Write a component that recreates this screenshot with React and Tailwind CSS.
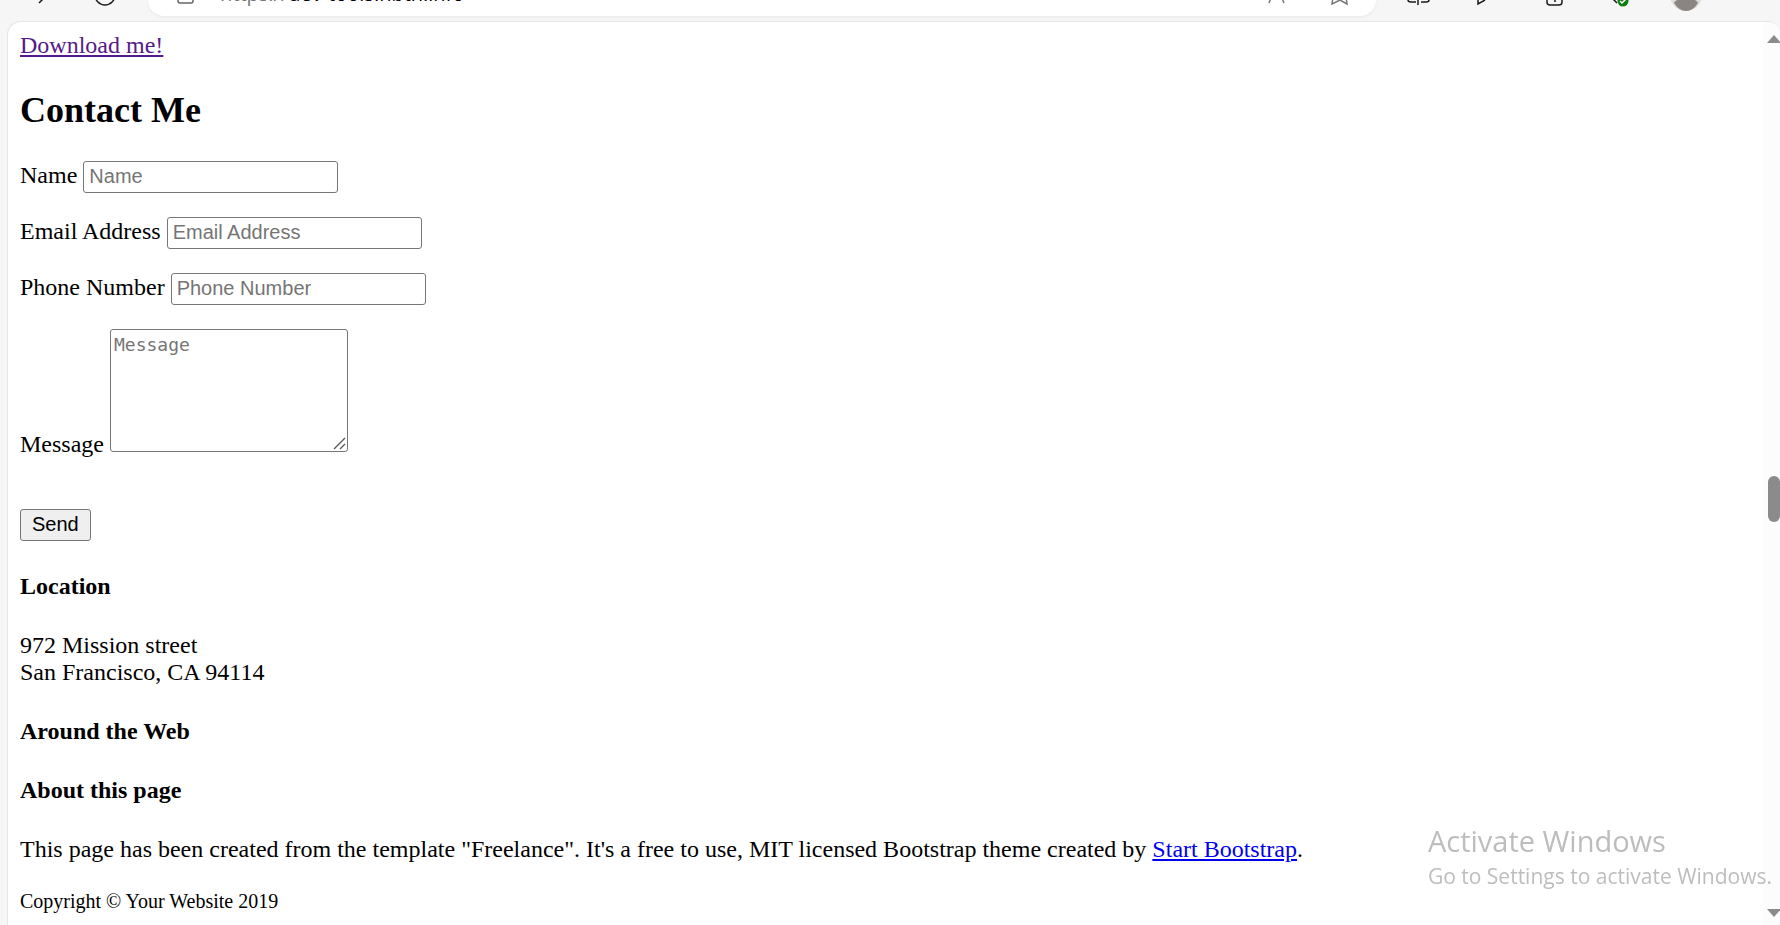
const field = "h-8 w-[255px] rounded-[3px] border border-[#767676] bg-white px-[5px] pb-px font-['Liberation_Sans',Arial,sans-serif] text-[20px] leading-[24px] text-black placeholder:text-[#757575]";

function Field({ id, label, type }) {
  return (
    <div className="flex items-baseline gap-[6px]">
      <label htmlFor={id}>{label}</label>
      <input id={id} type={type} placeholder={label} className={field} />
    </div>
  );
}

function Toolbar() {
  return (
    <header className="flex h-[21px] items-start overflow-hidden bg-[#f6f6f6]">
      <div className="flex w-[148px] shrink-0 pl-[32px]">
        <svg width="116" height="16" viewBox="32 0 116 16" fill="none" stroke="#1b1b1b" strokeWidth="1.5" aria-hidden="true">
          <path d="M39 3l6-6" />
          <circle cx="105" cy="-5" r="10" />
        </svg>
      </div>
      <div className="flex h-4 min-w-0 flex-1 items-end rounded-b-[28px] bg-white shadow-[0_1px_3px_rgba(0,0,0,0.06)]">
        <svg className="ml-[28px] shrink-0 self-start" width="20" height="10" viewBox="0 0 20 10" fill="none" stroke="#666" strokeWidth="1.5" aria-hidden="true">
          <path d="M2-4v5q0 2 2 2h11q2 0 2-2v-5" />
        </svg>
        <p className="mb-[10px] ml-[24px] h-6 flex-1 font-['Open_Sans',sans-serif] text-[20px] leading-[24px] text-[#767676]">
          https://<span className="text-black">dev-tools.hbtn.info</span>
        </p>
        <svg className="mr-[21px] shrink-0 self-start" width="90" height="10" viewBox="1265 0 90 10" fill="none" stroke="#777" strokeWidth="1.5" aria-hidden="true">
          <path d="M1269 3l2-5M1284 3l-2-5M1333-3l-1 7 8-4 7 4-1-7" />
        </svg>
      </div>
      <svg className="w-[404px] shrink-0" width="404" height="21" viewBox="1376 0 404 21" fill="none" stroke="#1b1b1b" strokeWidth="1.5" aria-hidden="true">
        <path d="M1408 0q0 2 3 2h5M1429 0q0 2-3 2h-5M1418-3v8M1478-2v6l7-4M1547-2v4q0 3 3 3h9q3 0 3-3v-4M1555-2v4M1613-1l4 4" />
        <circle cx="1623" cy="1" r="5.5" fill="#107c10" stroke="none" />
        <path d="M1620 1l2 2 4-4" stroke="#fff" strokeWidth="1.5" />
        <circle cx="1686" cy="-5" r="16" fill="#dedbd9" stroke="none" />
        <path d="M1674 3q3-5 12-5t12 5q-5 8-12 8t-12-8" fill="#8a8582" stroke="none" />
      </svg>
    </header>
  );
}

function Scrollbar() {
  return (
    <div className="flex w-[17px] shrink-0 flex-col items-end rounded-tr-[12px] bg-[#fcfcfc] pt-[13px] pb-[8px]" aria-hidden="true">
      <svg width="13" height="8" viewBox="0 0 13 8"><path d="M0 8l7-8 7 8z" fill="#8b8b8b" /></svg>
      <div className="flex-[432]" />
      <div className="h-[46px] w-3 rounded-[6px] bg-[#8b8b8b]" />
      <div className="flex-[386]" />
      <svg width="13" height="8" viewBox="0 0 13 8"><path d="M0 0l7 8 7-8z" fill="#8b8b8b" /></svg>
    </div>
  );
}

export default function App() {
  return (
    <div className="flex min-h-screen flex-col overflow-hidden bg-[#f6f6f6] font-['Liberation_Serif','Times_New_Roman',serif] text-[24px] leading-[27px] text-black">
      <Toolbar />
      <div className="ml-[7px] flex flex-1 rounded-tl-[14px] rounded-tr-[12px] border-t border-l border-[#e6e6e6] bg-white">
        <main className="min-w-0 flex-1 pt-[10px] pl-3">
          <a href="#download" className="text-[#551a8b] underline">Download me!</a>
          <h2 className="mt-[31px] text-[36px] leading-[41px] font-bold">Contact Me</h2>
          <form className="mt-[30px] flex flex-col items-start" onSubmit={(e) => e.preventDefault()}>
            <div className="flex flex-col gap-6">
              <Field id="name" label="Name" type="text" />
              <Field id="email" label="Email Address" type="email" />
              <Field id="phone" label="Phone Number" type="tel" />
              <div className="flex items-end gap-[6px]">
                <label htmlFor="message" className="-mb-[6px]">Message</label>
                <div className="relative flex">
                  <textarea
                    id="message"
                    placeholder="Message"
                    className="h-[123px] w-[238px] resize rounded-[3px] border border-[#767676] bg-white px-[3px] pt-[3px] font-['DejaVu_Sans_Mono',monospace] text-[18px] leading-[23px] placeholder:text-[#757575]"
                  />
                  <svg className="pointer-events-none absolute right-[2px] bottom-[2px] bg-white" width="13" height="13" viewBox="0 0 13 13" stroke="#555" strokeWidth="1.3" aria-hidden="true">
                    <path d="M1 12L12 1M7 12l5-5" />
                  </svg>
                </div>
              </div>
            </div>
            <button type="submit" className="mt-[57px] h-8 rounded-[3px] border border-[#767676] bg-[#efefef] px-[11px] pb-[3px] font-['Liberation_Sans',Arial,sans-serif] text-[20px] leading-[24px]">
              Send
            </button>
          </form>
          <h4 className="mt-8 font-bold">Location</h4>
          <p className="mt-8">972 Mission street<br />San Francisco, CA 94114</p>
          <h4 className="mt-8 font-bold">Around the Web</h4>
          <h4 className="mt-8 font-bold">About this page</h4>
          <p className="mt-8">
            This page has been created from the template "Freelance". It's a free to use, MIT licensed Bootstrap theme created by{" "}
            <a href="#start-bootstrap" className="text-[#0000ee] underline">Start Bootstrap</a>.
          </p>
          <small className="mt-[25px] block text-[20px]">Copyright © Your Website 2019</small>
        </main>
        <Scrollbar />
      </div>
      <aside className="pointer-events-none fixed right-[8px] bottom-[34px] font-['Open_Sans',sans-serif] text-[#bdbdbd]">
        <p className="text-[29px] leading-[40px]">Activate Windows</p>
        <p className="text-[21px] leading-[30px]">Go to Settings to activate Windows.</p>
      </aside>
    </div>
  );
}
